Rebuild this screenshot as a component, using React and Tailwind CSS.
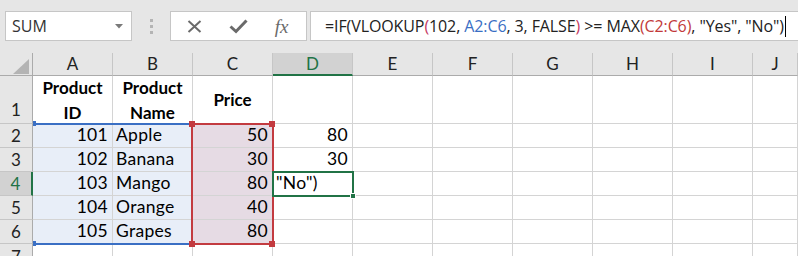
import React from "react";

const COLS = ["A", "B", "C", "D", "E", "F", "G", "H", "I", "J"];
const rows = [
  { n: 2, a: "101", b: "Apple", c: "50", d: "80" },
  { n: 3, a: "102", b: "Banana", c: "30", d: "30" },
  { n: 4, a: "103", b: "Mango", c: "80", d: "" },
  { n: 5, a: "104", b: "Orange", c: "40", d: "" },
  { n: 6, a: "105", b: "Grapes", c: "80", d: "" },
];

const cellFont = { fontFamily: "Lato, 'Open Sans', sans-serif" };

function Toolbar() {
  return (
    <div className="h-[53px] bg-[#e6e6e6] flex items-start pt-[11px] pl-[5px]">
      <div className="w-[127px] h-[30px] bg-white border border-[#c6c6c6] flex items-center pl-[6px] pr-[8px]">
        <span className="text-[16px] text-[#333] flex-1" style={{ fontFamily: "'Open Sans', sans-serif" }}>SUM</span>
        <svg width="8" height="5" viewBox="0 0 8 5"><path d="M0 0 L8 0 L4 4.5 Z" fill="#7a7a7a" /></svg>
      </div>
      <div className="w-[38px] h-[30px] flex flex-col items-center justify-center gap-[3px]">
        <div className="w-[3px] h-[3px] bg-[#b4b4b4]" />
        <div className="w-[3px] h-[3px] bg-[#b4b4b4]" />
        <div className="w-[3px] h-[3px] bg-[#b4b4b4]" />
      </div>
      <div className="w-[137px] h-[30px] bg-white border border-[#c6c6c6] flex items-center">
        <div className="w-[45px] flex justify-center pl-[2px]">
          <svg width="15" height="13" viewBox="0 0 15 13">
            <path d="M1.5 1 L13.5 12 M13.5 1 L1.5 12" stroke="#6a6a6a" strokeWidth="2" />
          </svg>
        </div>
        <div className="w-[45px] flex justify-center">
          <svg width="19" height="15" viewBox="0 0 19 15">
            <path d="M1.5 7.5 L7 12.5 L17.5 1.5" stroke="#6a6a6a" strokeWidth="3" fill="none" />
          </svg>
        </div>
        <div className="w-[45px] flex justify-center pr-[4px]">
          <span className="italic text-[19px] leading-none text-[#6a6a6a]" style={{ fontFamily: "'Liberation Serif', serif" }}>fx</span>
        </div>
      </div>
      <div className="ml-[3px] flex-1 h-[30px] bg-white border border-r-0 border-[#c6c6c6] flex items-center pl-[14px]">
        <span className="text-[16px] text-[#222] whitespace-nowrap tracking-[-0.1px]" style={{ fontFamily: "'Open Sans', sans-serif" }}>
          =IF(VLOOKUP<span className="text-[#c53a63]">(</span>102, <span className="text-[#3a6fc4]">A2:C6</span>, 3, FALSE<span className="text-[#c53a63]">)</span> &gt;= MAX<span className="text-[#c23a3a]">(C2:C6)</span>, "Yes", "No")
        </span>
        <span className="inline-block w-px h-[21px] bg-black ml-[1px]" />
      </div>
    </div>
  );
}

function ColHeader({ l }) {
  const sel = l === "D";
  return (
    <div
      className={
        "flex items-center justify-center text-[17px] border-r border-[#c6c6c6] " +
        (sel ? "bg-[#d2d2d2] text-[#217346] border-b-2 border-b-[#217346]" : "bg-[#e6e6e6] text-[#222] border-b border-b-[#ababab]")
      }
      style={cellFont}
    >
      {l}
    </div>
  );
}

function RowHeader({ n, bottom }) {
  const sel = n === 4;
  return (
    <div
      className={
        "flex justify-center text-[17px] border-b border-[#c6c6c6] " +
        (bottom ? "items-end pb-[1px] " : "items-center ") +
        (sel ? "bg-[#d2d2d2] text-[#217346] border-r-2 border-r-[#217346]" : "bg-[#e6e6e6] text-[#222] border-r border-r-[#ababab]")
      }
      style={cellFont}
    >
      {n}
    </div>
  );
}

function Cell({ children, align = "left", bg = "bg-white" }) {
  return (
    <div
      className={
        "border-r border-b border-[#d4d4d4] flex items-center text-[17.5px] tracking-[0.3px] text-black overflow-visible whitespace-nowrap " +
        bg +
        (align === "right" ? " justify-end pr-[4px]" : " justify-start pl-[3px]")
      }
      style={cellFont}
    >
      {children}
    </div>
  );
}

function Sheet() {
  return (
    <div className="relative grid grid-cols-[33px_repeat(9,80px)_1fr] grid-rows-[23px_48px_repeat(5,24px)_1fr] h-[203px]">
      <div className="bg-[#e6e6e6] border-r border-b border-[#ababab] relative">
        <svg className="absolute left-[13px] top-[6px]" width="16" height="15" viewBox="0 0 16 15">
          <path d="M16 0 L16 15 L0 15 Z" fill="#b4b4b4" />
        </svg>
      </div>
      {COLS.map((l) => (
        <ColHeader key={l} l={l} />
      ))}

      <RowHeader n={1} bottom />
      <div className="border-r border-b border-[#d4d4d4] flex flex-col items-center justify-center font-bold text-[17px] leading-[25px] pt-[1px]" style={cellFont}>
        <span>Product</span>
        <span>ID</span>
      </div>
      <div className="border-r border-b border-[#d4d4d4] flex flex-col items-center justify-center font-bold text-[17px] leading-[25px] pt-[1px]" style={cellFont}>
        <span>Product</span>
        <span>Name</span>
      </div>
      <div className="border-r border-b border-[#d4d4d4] flex items-center justify-center font-bold text-[17px]" style={cellFont}>
        Price
      </div>
      {Array.from({ length: 7 }).map((_, i) => (
        <Cell key={i} />
      ))}

      {rows.map((r) => (
        <React.Fragment key={r.n}>
          <RowHeader n={r.n} />
          <Cell align="right" bg="bg-[#e8eef8]">{r.a}</Cell>
          <Cell bg="bg-[#e8eef8]">{r.b}</Cell>
          <Cell align="right" bg="bg-[#e6dbe4]">{r.c}</Cell>
          {r.n === 4 ? <Cell>"No")</Cell> : <Cell align="right">{r.d}</Cell>}
          {Array.from({ length: 6 }).map((_, i) => (
            <Cell key={i} />
          ))}
        </React.Fragment>
      ))}

      <RowHeader n={7} />
      {Array.from({ length: 10 }).map((_, i) => (
        <Cell key={i} />
      ))}

      {/* blue range A2:B6 */}
      <div className="absolute left-[33px] top-[70px] w-[160px] h-[2px] bg-[#3a6fc4]" />
      <div className="absolute left-[33px] top-[190px] w-[160px] h-[2px] bg-[#3a6fc4]" />
      <div className="absolute left-[33px] top-[68px] w-[3px] h-[5px] bg-[#3a6fc4]" />
      <div className="absolute left-[33px] top-[188px] w-[3px] h-[5px] bg-[#3a6fc4]" />

      {/* red range C2:C6 */}
      <div className="absolute left-[191px] top-[70px] w-[83px] h-[122px] border-2 border-[#c33b40]" />
      <div className="absolute left-[189px] top-[68px] w-[6px] h-[6px] bg-[#c33b40]" />
      <div className="absolute left-[269px] top-[68px] w-[6px] h-[6px] bg-[#c33b40]" />
      <div className="absolute left-[189px] top-[188px] w-[6px] h-[6px] bg-[#c33b40]" />
      <div className="absolute left-[269px] top-[188px] w-[6px] h-[6px] bg-[#c33b40]" />

      {/* active cell D4 */}
      <div className="absolute left-[272px] top-[118px] w-[82px] h-[26px] border-2 border-[#217346]" />
      <div className="absolute left-[350px] top-[140px] w-[6px] h-[6px] bg-[#217346] border border-white" />
    </div>
  );
}

export default function App() {
  return (
    <div className="w-[798px] h-[256px] overflow-hidden bg-white">
      <Toolbar />
      <Sheet />
    </div>
  );
}
